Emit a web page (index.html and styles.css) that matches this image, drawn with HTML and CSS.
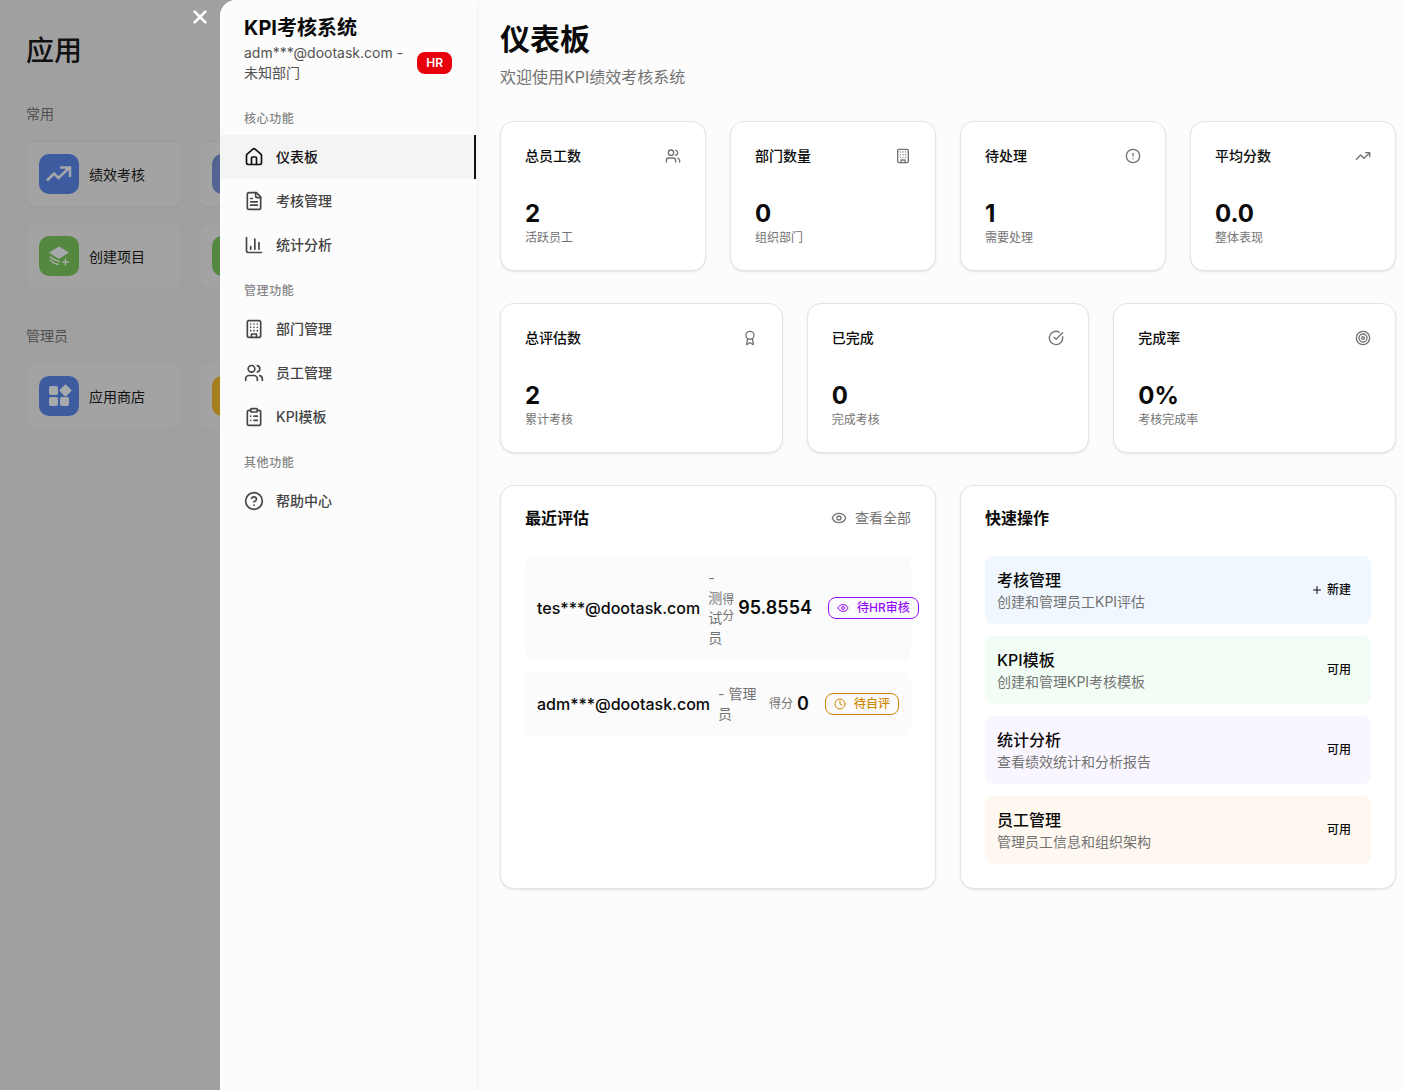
FILE: index.html
```html
<!DOCTYPE html>
<html lang="zh-CN">
<head>
  <meta charset="UTF-8" />
  <meta name="viewport" content="width=device-width, initial-scale=1.0"/>
  <title>KPI考核系统</title>
  <link rel="stylesheet" href="styles.css">
</head>
<body>

<!-- Shared icons -->
<svg class="sprite" aria-hidden="true">
  <symbol id="i-home" viewBox="0 0 24 24"><path d="M15 21v-8a1 1 0 0 0-1-1h-4a1 1 0 0 0-1 1v8"/><path d="M3 10a2 2 0 0 1 .709-1.528l7-5.999a2 2 0 0 1 2.582 0l7 5.999A2 2 0 0 1 21 10v9a2 2 0 0 1-2 2H5a2 2 0 0 1-2-2z"/></symbol>
  <symbol id="i-file" viewBox="0 0 24 24"><path d="M15 2H6a2 2 0 0 0-2 2v16a2 2 0 0 0 2 2h12a2 2 0 0 0 2-2V7Z"/><path d="M14 2v4a2 2 0 0 0 2 2h4"/><path d="M10 9H8"/><path d="M16 13H8"/><path d="M16 17H8"/></symbol>
  <symbol id="i-chart" viewBox="0 0 24 24"><path d="M3 3v16a2 2 0 0 0 2 2h16"/><path d="M18 17V9"/><path d="M13 17V5"/><path d="M8 17v-3"/></symbol>
  <symbol id="i-building" viewBox="0 0 24 24"><rect width="16" height="20" x="4" y="2" rx="2"/><path d="M9 22v-4h6v4"/><path d="M8 6h.01M16 6h.01M12 6h.01M12 10h.01M12 14h.01M16 10h.01M16 14h.01M8 10h.01M8 14h.01"/></symbol>
  <symbol id="i-users" viewBox="0 0 24 24"><path d="M16 21v-2a4 4 0 0 0-4-4H6a4 4 0 0 0-4 4v2"/><circle cx="9" cy="7" r="4"/><path d="M22 21v-2a4 4 0 0 0-3-3.87"/><path d="M16 3.13a4 4 0 0 1 0 7.75"/></symbol>
  <symbol id="i-clipboard" viewBox="0 0 24 24"><rect width="8" height="4" x="8" y="2" rx="1"/><path d="M16 4h2a2 2 0 0 1 2 2v14a2 2 0 0 1-2 2H6a2 2 0 0 1-2-2V6a2 2 0 0 1 2-2h2"/><path d="M12 11h4M12 16h4M8 11h.01M8 16h.01"/></symbol>
  <symbol id="i-help" viewBox="0 0 24 24"><circle cx="12" cy="12" r="10"/><path d="M9.09 9a3 3 0 0 1 5.83 1c0 2-3 3-3 3"/><path d="M12 17h.01"/></symbol>
  <symbol id="i-alert" viewBox="0 0 24 24"><circle cx="12" cy="12" r="10"/><path d="M12 8v4M12 16h.01"/></symbol>
  <symbol id="i-trend" viewBox="0 0 24 24"><path d="m22 7-8.5 8.5-5-5L2 17"/><path d="M16 7h6v6"/></symbol>
  <symbol id="i-award" viewBox="0 0 24 24"><path d="m15.477 12.89 1.515 8.526a.5.5 0 0 1-.81.47l-3.58-2.687a1 1 0 0 0-1.197 0l-3.586 2.686a.5.5 0 0 1-.81-.469l1.514-8.526"/><circle cx="12" cy="8" r="6"/></symbol>
  <symbol id="i-check" viewBox="0 0 24 24"><path d="M21.801 10A10 10 0 1 1 17 3.335"/><path d="m9 11 3 3L22 4"/></symbol>
  <symbol id="i-target" viewBox="0 0 24 24"><circle cx="12" cy="12" r="10"/><circle cx="12" cy="12" r="6"/><circle cx="12" cy="12" r="2"/></symbol>
  <symbol id="i-eye" viewBox="0 0 24 24"><path d="M2.062 12.348a1 1 0 0 1 0-.696 10.75 10.75 0 0 1 19.876 0 1 1 0 0 1 0 .696 10.75 10.75 0 0 1-19.876 0"/><circle cx="12" cy="12" r="3"/></symbol>
  <symbol id="i-clock" viewBox="0 0 24 24"><circle cx="12" cy="12" r="10"/><path d="M12 6v6l4 2"/></symbol>
  <symbol id="i-plus" viewBox="0 0 24 24"><path d="M5 12h14M12 5v14"/></symbol>
  <symbol id="i-close" viewBox="0 0 24 24"><path d="M4 4l16 16M20 4L4 20"/></symbol>
</svg>

<!-- App list behind the drawer -->
<div class="apps">
  <button class="close" aria-label="关闭"><svg class="icon"><use href="#i-close"/></svg></button>
  <h1>应用</h1>

  <h2>常用</h2>
  <div class="app-grid">
    <button class="app">
      <span class="app-icon blue"><svg viewBox="0 0 40 40"><path class="line" d="M8 26.500l7-7 4.500 4.500 10.500-10M21 13.500h10v9.500"/></svg></span>
      绩效考核
    </button>
    <button class="app" aria-label="应用"><span class="app-icon slate"></span></button>
    <button class="app">
      <span class="app-icon green"><svg viewBox="0 0 40 40"><path d="M20 10.500l10 6-10 6.500-10-6.500z"/><path class="thin" d="M11 20.500q4 4 10 5M11 24q4 4 9 4.500M26.500 22.500v7M23 26h7"/></svg></span>
      创建项目
    </button>
    <button class="app" aria-label="应用"><span class="app-icon green"></span></button>
  </div>

  <h2>管理员</h2>
  <div class="app-grid">
    <button class="app">
      <span class="app-icon blue"><svg viewBox="0 0 40 40"><rect x="10" y="10" width="9" height="9" rx="2"/><rect x="10" y="21" width="9" height="9" rx="2"/><rect x="21" y="21" width="9" height="9" rx="2"/><rect x="22" y="10" width="9" height="9" rx="1" transform="rotate(45 26.500 14.500)"/></svg></span>
      应用商店
    </button>
    <button class="app" aria-label="应用"><span class="app-icon gold"></span></button>
  </div>
</div>

<!-- Drawer -->
<div class="drawer">
  <aside class="sidebar">
    <header class="brand">
      <h2>KPI考核系统</h2>
      <div class="account">
        <p>adm***@dootask.com - 未知部门</p>
        <span class="role-badge">HR</span>
      </div>
    </header>
    <nav>
      <h3>核心功能</h3>
      <a class="active" href="#"><svg class="icon"><use href="#i-home"/></svg>仪表板</a>
      <a href="#"><svg class="icon"><use href="#i-file"/></svg>考核管理</a>
      <a href="#"><svg class="icon"><use href="#i-chart"/></svg>统计分析</a>
      <h3>管理功能</h3>
      <a href="#"><svg class="icon"><use href="#i-building"/></svg>部门管理</a>
      <a href="#"><svg class="icon"><use href="#i-users"/></svg>员工管理</a>
      <a href="#"><svg class="icon"><use href="#i-clipboard"/></svg>KPI模板</a>
      <h3>其他功能</h3>
      <a href="#"><svg class="icon"><use href="#i-help"/></svg>帮助中心</a>
    </nav>
  </aside>

  <main>
    <header class="page-head">
      <h1>仪表板</h1>
      <p>欢迎使用KPI绩效考核系统</p>
    </header>

    <section class="grid four">
      <div class="card stat">
        <h3>总员工数<svg class="icon"><use href="#i-users"/></svg></h3>
        <strong>2</strong>
        <p>活跃员工</p>
      </div>
      <div class="card stat">
        <h3>部门数量<svg class="icon"><use href="#i-building"/></svg></h3>
        <strong>0</strong>
        <p>组织部门</p>
      </div>
      <div class="card stat">
        <h3>待处理<svg class="icon"><use href="#i-alert"/></svg></h3>
        <strong>1</strong>
        <p>需要处理</p>
      </div>
      <div class="card stat">
        <h3>平均分数<svg class="icon"><use href="#i-trend"/></svg></h3>
        <strong>0.0</strong>
        <p>整体表现</p>
      </div>
    </section>

    <section class="grid three">
      <div class="card stat">
        <h3>总评估数<svg class="icon"><use href="#i-award"/></svg></h3>
        <strong>2</strong>
        <p>累计考核</p>
      </div>
      <div class="card stat">
        <h3>已完成<svg class="icon"><use href="#i-check"/></svg></h3>
        <strong>0</strong>
        <p>完成考核</p>
      </div>
      <div class="card stat">
        <h3>完成率<svg class="icon"><use href="#i-target"/></svg></h3>
        <strong>0%</strong>
        <p>考核完成率</p>
      </div>
    </section>

    <section class="grid two">
      <div class="card">
        <div class="card-head">
          <h3>最近评估</h3>
          <a href="#"><svg class="icon"><use href="#i-eye"/></svg>查看全部</a>
        </div>
        <div class="list">
          <div class="review">
            <div class="person"><b>tes***@dootask.com</b><span>- 测试员</span></div>
            <div class="result">
              <div class="score"><span>得分</span><b>95.8554</b></div>
              <span class="status purple"><svg class="icon"><use href="#i-eye"/></svg>待HR审核</span>
            </div>
          </div>
          <div class="review">
            <div class="person"><b>adm***@dootask.com</b><span>- 管理员</span></div>
            <div class="result">
              <div class="score"><span>得分</span><b>0</b></div>
              <span class="status amber"><svg class="icon"><use href="#i-clock"/></svg>待自评</span>
            </div>
          </div>
        </div>
      </div>

      <div class="card">
        <div class="card-head">
          <h3>快速操作</h3>
        </div>
        <div class="list">
          <div class="action bg-blue">
            <div><h4>考核管理</h4><p>创建和管理员工KPI评估</p></div>
            <button><svg class="icon"><use href="#i-plus"/></svg>新建</button>
          </div>
          <div class="action bg-green">
            <div><h4>KPI模板</h4><p>创建和管理KPI考核模板</p></div>
            <button>可用</button>
          </div>
          <div class="action bg-purple">
            <div><h4>统计分析</h4><p>查看绩效统计和分析报告</p></div>
            <button>可用</button>
          </div>
          <div class="action bg-orange">
            <div><h4>员工管理</h4><p>管理员工信息和组织架构</p></div>
            <button>可用</button>
          </div>
        </div>
      </div>
    </section>
  </main>
</div>

</body>
</html>
```
FILE: styles.css
```css
* { box-sizing: border-box; margin: 0; padding: 0; }

body {
  display: flex;
  min-height: 100vh;
  background: #a0a0a0;
  color: #0a0a0a;
  font-family: Inter, "Noto Sans CJK SC", sans-serif;
  font-size: 14px;
  line-height: 20px;
}

button { font: inherit; color: inherit; background: none; border: 0; cursor: pointer; }
a { color: inherit; text-decoration: none; }

.sprite { position: absolute; width: 0; height: 0; }
.icon {
  flex: none;
  width: 16px; height: 16px;
  fill: none;
  stroke: currentColor;
  stroke-width: 2;
  stroke-linecap: round;
  stroke-linejoin: round;
}

/* App list */
.apps {
  position: relative;
  flex: 0 0 220px;
  overflow: hidden;
  padding: 31px 0 0 26px;
  font-family: "Noto Sans CJK SC", sans-serif;
  color: #111;
}
.apps h1 { font-size: 28px; line-height: 36px; font-weight: 500; }
.apps h2 {
  margin: 36px 0 18px;
  font-size: 14px;
  line-height: 20px;
  font-weight: 400;
  color: #505050;
}
.close {
  position: absolute;
  top: 5px; right: 8px;
  display: flex;
  padding: 4px;
  color: #fff;
}
.close .icon { stroke-width: 4; }

.app-grid {
  display: grid;
  grid-template-columns: repeat(2, 156px);
  gap: 16px 17px;
}
.app {
  display: flex;
  align-items: center;
  gap: 10px;
  height: 66px;
  padding: 0 12px;
  border: 1px dotted #959595;
  border-radius: 8px;
  background: #a3a3a3;
}
.app-icon { flex: none; width: 40px; height: 40px; border-radius: 10px; }
.app-icon svg { display: block; fill: #a8a9ac; }
.app-icon .line { fill: none; stroke: #a5a7ab; stroke-width: 2.5; }
.app-icon .thin { fill: none; stroke: #a8aca6; stroke-width: 1.5; }
.blue { background: #3d5c9f; }
.slate { background: #526590; }
.green { background: #548840; }
.gold { background: #a67f1e; }

/* Drawer */
.drawer {
  flex: 1;
  display: flex;
  min-width: 0;
  overflow: hidden;
  border-radius: 16px 0 0 0;
  background: #fcfcfc;
}

.sidebar {
  flex: 0 0 256px;
  background: #fcfcfc;
  box-shadow: 0 0 8px rgba(0, 0, 0, 0.06);
}
.brand { padding: 14px 24px 12px; }
.brand h2 { margin-bottom: 1px; font-size: 20px; line-height: 28px; font-weight: 700; }
.account { display: flex; align-items: center; justify-content: space-between; gap: 8px; color: #525252; }
.role-badge {
  padding: 3px 9px;
  border-radius: 8px;
  background: #e7000b;
  color: #fff;
  font-size: 12px;
  line-height: 16px;
  font-weight: 600;
}

nav h3 {
  padding: 16px 24px 8px;
  font-size: 12px;
  line-height: 16px;
  font-weight: 500;
  letter-spacing: 0.05em;
  color: #858585;
}
nav a {
  display: flex;
  align-items: center;
  gap: 12px;
  height: 44px;
  padding: 0 24px;
  font-weight: 500;
  color: #454545;
}
nav .icon { width: 20px; height: 20px; }
nav .active { background: #f4f4f4; border-right: 2px solid #111; color: #111; }

/* Dashboard */
main { flex: 1; min-width: 0; padding: 21px 8px 24px 24px; }
.page-head { margin-bottom: 32px; }
.page-head h1 { margin-bottom: 8px; font-size: 30px; line-height: 36px; font-weight: 700; }
.page-head p { font-size: 16px; line-height: 24px; color: #737373; }

.grid { display: grid; gap: 24px; margin-bottom: 32px; }
.four { grid-template-columns: repeat(4, 1fr); }
.three { grid-template-columns: repeat(3, 1fr); }
.two { grid-template-columns: repeat(2, minmax(0, 1fr)); }

.card {
  padding: 24px;
  border: 1px solid #e5e5e5;
  border-radius: 14px;
  background: #fff;
  box-shadow: 0 1px 2px rgba(0, 0, 0, 0.1);
}

.stat h3 {
  display: flex;
  align-items: center;
  justify-content: space-between;
  margin-bottom: 32px;
  font-size: 14px;
  font-weight: 500;
}
.stat .icon { color: #737373; }
.stat strong { display: block; font-size: 24px; line-height: 32px; font-weight: 700; }
.stat p { font-size: 12px; line-height: 16px; color: #737373; }

.card-head { display: flex; align-items: center; justify-content: space-between; height: 16px; margin-bottom: 30px; }
.card-head h3 { font-size: 16px; line-height: 16px; font-weight: 600; }
.card-head a { display: flex; align-items: center; gap: 8px; color: #737373; }

.list { display: flex; flex-direction: column; gap: 12px; }

/* The person column gives way first, the score only when it has to */
.review {
  display: flex;
  align-items: center;
  justify-content: space-between;
  padding: 12px;
  border-radius: 8px;
  background: #fbfbfb;
}
.person { display: flex; flex-shrink: 1000; align-items: center; gap: 8px; }
.person b { font-size: 16px; line-height: 24px; font-weight: 500; }
.person span { color: #737373; }
.result { display: flex; align-items: center; gap: 16px; }
.score { display: flex; align-items: center; gap: 4px; }
.score span { font-size: 12px; line-height: 16px; color: #737373; }
.score b { font-size: 18px; line-height: 28px; font-weight: 600; }

.status {
  display: flex;
  align-items: center;
  gap: 8px;
  padding: 2px 8px;
  border: 1px solid;
  border-radius: 8px;
  font-size: 12px;
  line-height: 16px;
  font-weight: 500;
  white-space: nowrap;
}
.status .icon { width: 12px; height: 12px; }
.purple { color: #9810fa; }
.amber { color: #d08700; }

.action {
  display: flex;
  align-items: center;
  justify-content: space-between;
  padding: 12px;
  border-radius: 8px;
}
.action h4 { font-size: 16px; line-height: 24px; font-weight: 500; }
.action p { color: #737373; }
.action button {
  display: flex;
  align-items: center;
  gap: 4px;
  padding: 2px 8px;
  font-size: 12px;
  line-height: 16px;
  font-weight: 500;
}
.action .icon { width: 12px; height: 12px; }
.bg-blue { background: #f0f7ff; }
.bg-green { background: #f2fdf5; }
.bg-purple { background: #faf6ff; }
.bg-orange { background: #fff8f0; }
```
